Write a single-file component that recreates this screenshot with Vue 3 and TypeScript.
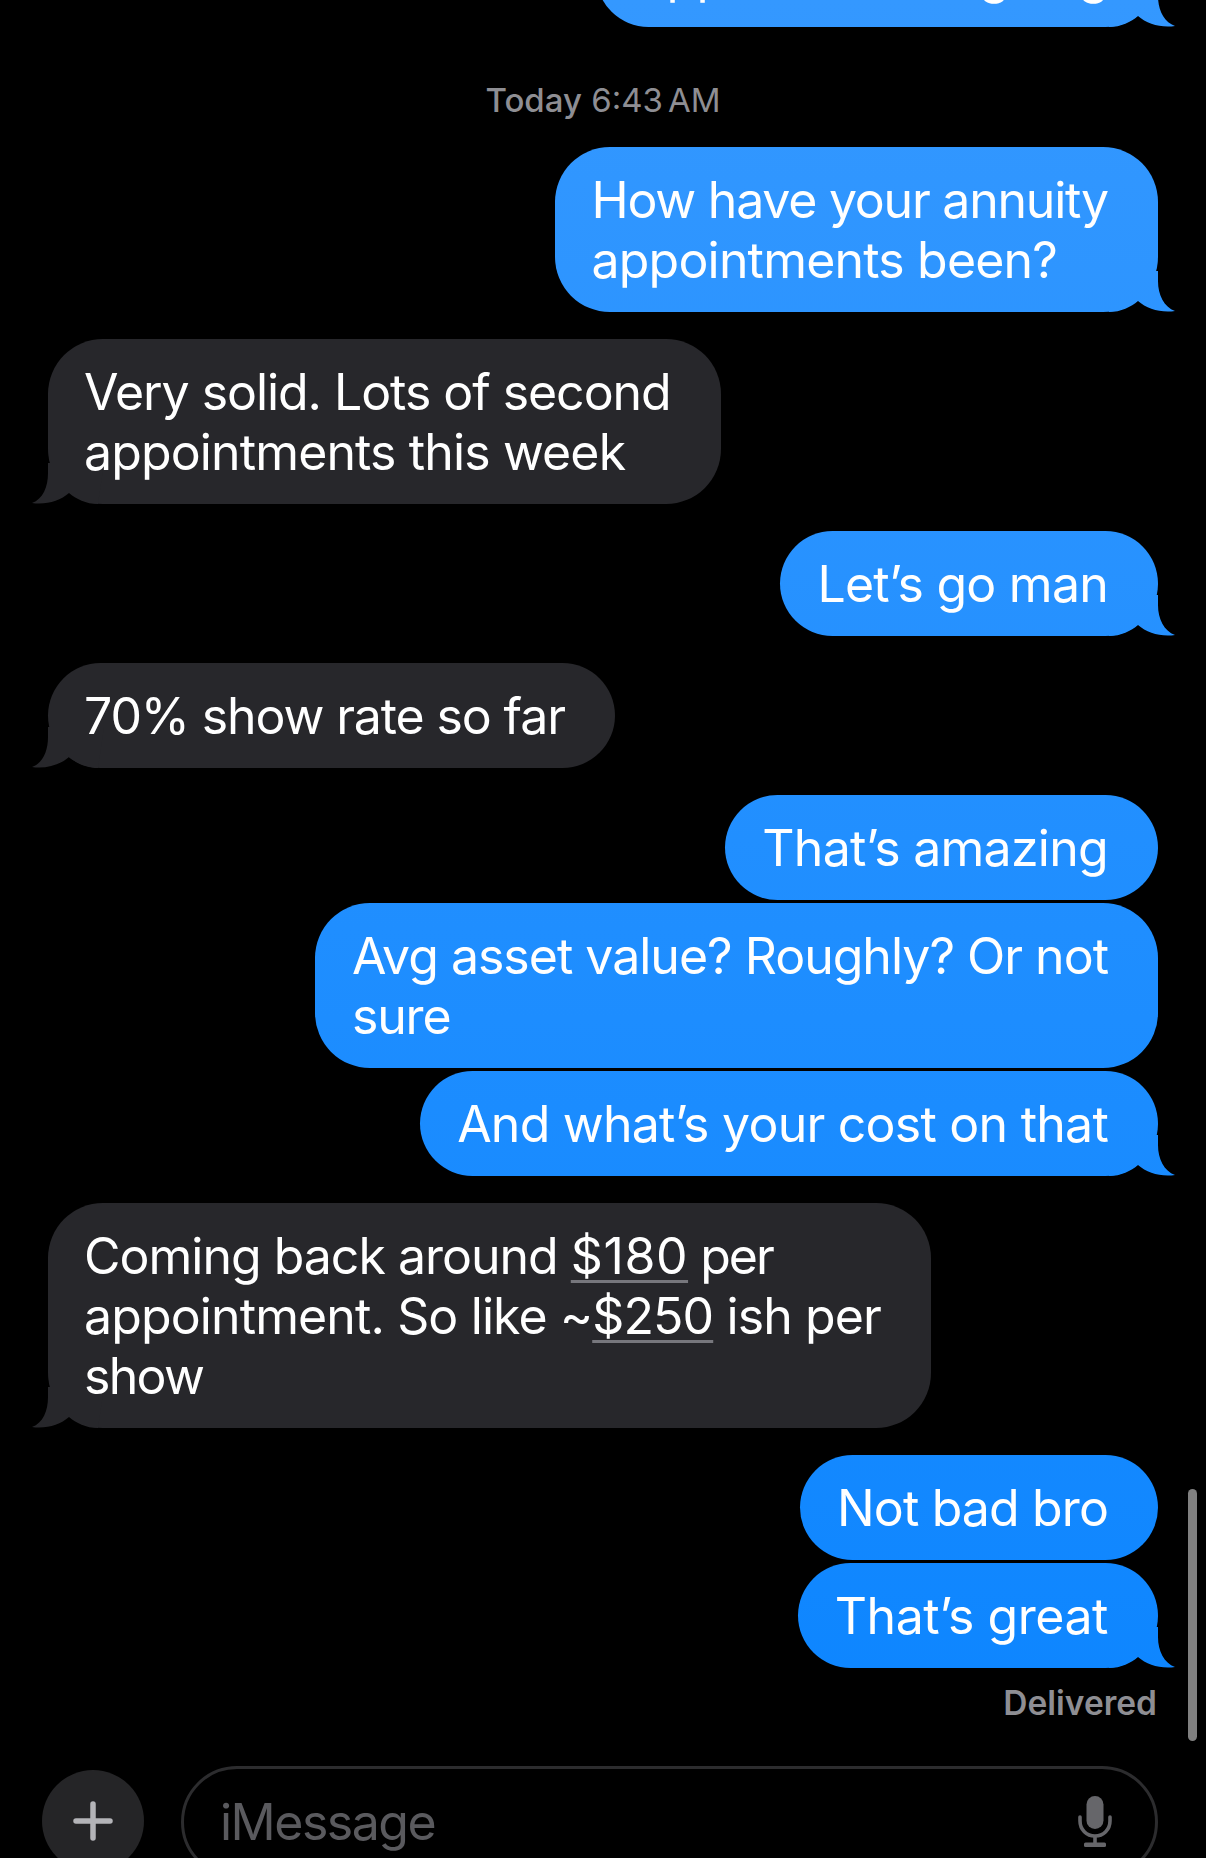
<script setup lang="ts">
interface Part { t: string; link?: boolean; track?: number }
interface Line { parts: Part[]; track: number }
interface Msg { side: 'me' | 'them'; lines: Line[]; tail: boolean; gap: 'tight' | 'wide' }
const l = (t: string, track: number): Line => ({ parts: [{ t }], track })
const messages: Msg[] = [
  { side: 'me', lines: [l('How have your annuity', -1.23), l('appointments been?', -0.81)], tail: true, gap: 'wide' },
  { side: 'them', lines: [l('Very solid. Lots of second', -1.05), l('appointments this week', -0.87)], tail: true, gap: 'wide' },
  { side: 'me', lines: [l('Let’s go man', -0.75)], tail: true, gap: 'wide' },
  { side: 'them', lines: [l('70% show rate so far', -1.12)], tail: true, gap: 'wide' },
  { side: 'me', lines: [l('That’s amazing', -0.72)], tail: false, gap: 'wide' },
  { side: 'me', lines: [l('Avg asset value? Roughly? Or not', -1.0), l('sure', -1.15)], tail: false, gap: 'tight' },
  { side: 'me', lines: [l('And what’s your cost on that', -0.76)], tail: true, gap: 'tight' },
  {
    side: 'them',
    lines: [
      { parts: [{ t: 'Coming back around ' }, { t: '$180', link: true, track: 0.6 }, { t: ' per', track: -2 }], track: -1 },
      { parts: [{ t: 'appointment. So like ~' }, { t: '$250', link: true }, { t: ' ish per' }], track: -0.88 },
      l('show', -1.7),
    ],
    tail: true,
    gap: 'wide',
  },
  { side: 'me', lines: [l('Not bad bro', -0.87)], tail: false, gap: 'wide' },
  { side: 'me', lines: [l('That’s great', -0.45)], tail: true, gap: 'tight' },
]
</script>

<template>
  <div class="screen">
    <main class="thread">
      <div class="bubble me first">
        <div class="line">Appointments going</div>
        <span class="tail"></span>
      </div>
      <div class="stamp"><b>Today</b> 6:43<span class="am">AM</span></div>
      <div
        v-for="(m, i) in messages"
        :key="i"
        class="bubble"
        :class="[m.side, i === 0 ? '' : 'gap-' + m.gap]"
      >
        <div v-for="(ln, j) in m.lines" :key="j" class="line" :style="{ letterSpacing: ln.track + 'px' }">
          <template v-for="(s, k) in ln.parts" :key="k"><span :class="{ link: s.link }" :style="s.track === undefined ? undefined : { letterSpacing: s.track + 'px' }">{{ s.t }}</span></template>
        </div>
        <span v-if="m.tail" class="tail"></span>
      </div>
      <div class="delivered">Delivered</div>
    </main>

    <footer class="composer">
      <button class="plus" aria-label="Add">
        <svg width="40" height="40" viewBox="0 0 40 40">
          <path d="M20 3v34M3 20h34" stroke="#b4b4b8" stroke-width="5.5" stroke-linecap="round" fill="none" />
        </svg>
      </button>
      <div class="field">
        <span class="placeholder">iMessage</span>
        <svg class="mic" width="36" height="52" viewBox="0 0 36 52">
          <rect x="9.5" y="0" width="17" height="33" rx="8.5" fill="#66666a" />
          <path d="M3 21v4c0 8.5 6.5 15 15 15s15-6.500 15-15v-4" stroke="#66666a" stroke-width="3.6" stroke-linecap="round" fill="none" />
          <path d="M18 40v8" stroke="#66666a" stroke-width="3.6" fill="none" />
          <rect x="7" y="46.500" width="22" height="4.500" rx="1.500" fill="#66666a" />
        </svg>
      </div>
    </footer>

    <div class="scrollbar"></div>
  </div>
</template>

<style>
html, body { margin: 0; background: #000; }
</style>

<style scoped>
.screen {
  position: relative;
  width: 1206px;
  height: 1858px;
  overflow: hidden;
  background: #000;
  font-family: Inter, "Liberation Sans", sans-serif;
  color: #fff;
  display: flex;
  flex-direction: column;
}
.thread {
  display: flex;
  flex-direction: column;
  padding: 0 48px;
}
.bubble {
  position: relative;
  box-sizing: border-box;
  padding: 23px 50px 22px 37px;
  border-radius: 55px;
  font-size: 50px;
  line-height: 60px;
  letter-spacing: -0.8px;
  white-space: nowrap;
}
.line { position: relative; z-index: 1; }
.first { margin-top: -78px; word-spacing: 14px; }
.me {
  align-self: flex-end;
  background: linear-gradient(180deg, #3498ff 0, #0a84ff 1858px) fixed;
}
.them {
  align-self: flex-start;
  padding-left: 36px;
  padding-right: 50px;
  background: #27272b;
}
.gap-wide { margin-top: 27px; }
.gap-tight { margin-top: 3px; }
.tail {
  position: absolute;
  right: -17px;
  bottom: 0;
  width: 72px;
  height: 41px;
  background: inherit;
  background-attachment: fixed;
  clip-path: path('M0 0H55V10C55 24 61 36 72 40C58 42 44 38 35 30C28 36 18 41 6 41Z');
}
.them .tail {
  right: auto;
  left: -16px;
  clip-path: path('M72 0H16V10C16 24 11 36 0 40C14 42 28 38 37 30C44 36 54 41 66 41Z');
}
.link {
  text-decoration: underline;
  text-decoration-color: #77777d;
  text-decoration-thickness: 3px;
  text-underline-offset: 6px;
  text-decoration-skip-ink: none;
}
.stamp {
  margin: 53px 0 27px;
  align-self: center;
  font-size: 33px;
  line-height: 40px;
  color: #8e8e93;
  letter-spacing: 0;
}
.stamp b { font-weight: 500; }
.am { margin-left: 5px; }
.delivered {
  align-self: flex-end;
  margin-top: 15px;
  margin-right: 1px;
  font-size: 33.5px;
  line-height: 40px;
  font-weight: 600;
  color: #8e8e93;
}
.composer {
  position: absolute;
  left: 42px;
  right: 48px;
  top: 1766px;
  display: flex;
  align-items: flex-start;
  gap: 37px;
}
.plus {
  flex: none;
  width: 102px;
  height: 102px;
  margin-top: 4px;
  padding: 0;
  border: 0;
  border-radius: 50%;
  background: #252527;
  display: flex;
  align-items: center;
  justify-content: center;
}
.field {
  flex: 1;
  box-sizing: border-box;
  height: 112px;
  border: 3px solid #2c2c2e;
  border-radius: 56px;
  padding: 0 42px 0 36px;
  display: flex;
  align-items: center;
  justify-content: space-between;
}
.placeholder {
  font-size: 50px;
  line-height: 60px;
  letter-spacing: -1.5px;
  color: #5a5a5e;
}
.scrollbar {
  position: absolute;
  left: 1188px;
  top: 1489px;
  width: 9px;
  height: 252px;
  border-radius: 5px;
  background: #808080;
}
</style>
